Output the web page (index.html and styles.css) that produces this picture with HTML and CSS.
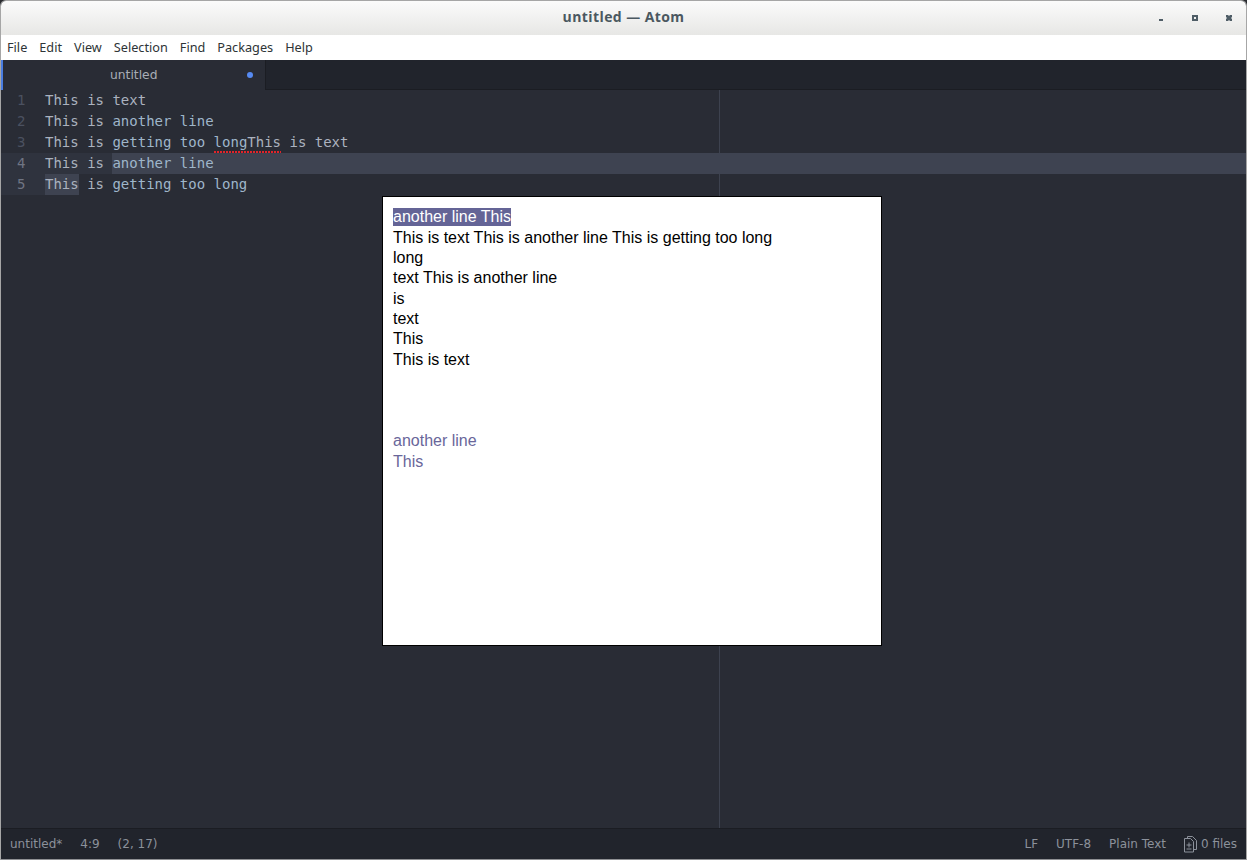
FILE: index.html
```html
<!DOCTYPE html>
<html lang="en">
<head>
<meta charset="utf-8">
<title>untitled — Atom</title>
<link rel="stylesheet" href="styles.css">
</head>
<body>
<div class="window">
  <header class="titlebar">
    <div class="title">untitled — Atom</div>
    <div class="controls">
      <svg class="ctl" width="12" height="12" viewBox="0 0 12 12"><rect x="3" y="6" width="4" height="2" fill="#4f5d66"/></svg>
      <svg class="ctl" width="12" height="12" viewBox="0 0 12 12"><path fill-rule="evenodd" d="M2 2h6v6H2zM4 4v2h2V4z" fill="#4f5d66"/></svg>
      <svg class="ctl" width="12" height="12" viewBox="0 0 12 12"><path d="M2 2h2l1 1h0l1-1h2v2L7 5l1 1v2H6L5 7 4 8H2V6l1-1-1-1z" fill="#4f5d66"/></svg>
    </div>
  </header>
  <nav class="menubar">
    <span class="menu">File</span><span class="menu">Edit</span><span class="menu">View</span><span class="menu">Selection</span><span class="menu">Find</span><span class="menu">Packages</span><span class="menu">Help</span>
  </nav>
  <div class="tabbar">
    <div class="tab"><span class="tab-title">untitled</span><span class="tab-dot"></span></div>
  </div>
  <main class="editor">
    <div class="wrap-guide"></div>
    <div class="row"><span class="num">1</span><span class="code">This is <span class="w">text</span></span></div>
    <div class="row"><span class="num">2</span><span class="code">This is <span class="b">another line</span></span></div>
    <div class="row"><span class="num">3</span><span class="code">This is <span class="b">getting too </span><span class="spell"><span class="b">long</span>This</span> is text</span></div>
    <div class="row row-active"><span class="num num-active">4</span><span class="code">This is <span class="b sel-run">another line</span></span></div>
    <div class="row"><span class="num num-active">5</span><span class="code"><span class="sel">This</span> is <span class="b">getting too long</span></span></div>
    <section class="popup">
      <div class="pl"><span class="hl">another line This</span></div>
      <div class="pl">This is text This is another line This is getting too long</div>
      <div class="pl">long</div>
      <div class="pl">text This is another line</div>
      <div class="pl">is</div>
      <div class="pl">text</div>
      <div class="pl">This</div>
      <div class="pl">This is text</div>
      <div class="pl"></div>
      <div class="pl"></div>
      <div class="pl pur">another line</div>
      <div class="pl pur">This</div>
    </section>
  </main>
  <footer class="statusbar">
    <div class="st-left"><span>untitled*</span><span>4:9</span><span>(2, 17)</span></div>
    <div class="st-right"><span>LF</span><span>UTF-8</span><span>Plain Text</span>
      <span class="files"><svg width="15" height="17" viewBox="0 0 15 17" fill="none" stroke="#8c919b" stroke-width="1"><path d="M4.5 2.5V.5h5l4 4v9h-3M1.5 2.5h6l3 3v10.500h-9zM6 6.500v5M3.500 9h5M3.500 13h5"/></svg>0 files</span>
    </div>
  </footer>
</div>
</body>
</html>
```
FILE: styles.css
```css
* { box-sizing: border-box; }
html, body { margin: 0; padding: 0; height: 100%; background: #2a2c30; }
.window {
  width: 1247px; height: 860px;
  display: flex; flex-direction: column;
  border: 1px solid #a6a6a6; border-bottom-color: #8f9094;
  border-radius: 6px 6px 0 0;
  overflow: hidden;
  background: #292c35;
}
.titlebar {
  height: 34px; flex: none;
  display: flex; align-items: center; justify-content: center;
  background: linear-gradient(#fbfbfb, #e7e7e5);
  position: relative;
  padding: 0 0 3px;
}
.title { font: bold 14px "Open Sans", "Noto Sans", sans-serif; color: #4b5860; letter-spacing: .42px; }
.controls { position: absolute; right: 0; top: 0; height: 34px; display: flex; align-items: center; gap: 22px; padding: 2px 10px 0 0; }
.ctl { display: block; }
.menubar {
  height: 25px; flex: none; background: #fff;
  display: flex; align-items: center; padding: 0 0 2px 6px; gap: 12px;
  font: 12.7px "Noto Sans", "Open Sans", sans-serif; color: #2e3436;
}
.tabbar { height: 30px; flex: none; background: #21242c; display: flex; border-bottom: 1px solid #1b1d23; }
.tab {
  width: 265px; height: 30px; flex: none;
  background: #292c35; border-left: 2px solid #4a7de0; border-right: 1px solid #1b1d23;
  display: flex; align-items: center; position: relative;
  font: 13px "DejaVu Sans", sans-serif; color: #a8adb6;
}
.tab-title { position: absolute; left: 107px; top: 7px; line-height: 16px; font-size: 12.3px; }
.tab-dot { position: absolute; left: 244px; top: 12px; width: 6px; height: 6px; border-radius: 50%; background: #568af2; }
.editor {
  flex: 1; position: relative; background: #292c35;
  font: 14px/21px "DejaVu Sans Mono", monospace; color: #abb2bf;
}
.row { height: 21px; display: flex; white-space: pre; }
.row-active { background: #3e4351; position: relative; }
.num { width: 44px; flex: none; padding-left: 16px; color: #4b5160; }
.num-active { background: #2f333e; color: #6f7583; }
.row-active .code { background: #2f333e; display: flex; white-space: pre; }
.code { flex: 1; min-width: 0; }
.sel-run { flex: 1; background: #3e4351; }
.b { color: #9fb6ca; }
.w { color: #abb2bf; }
.sel { background: #3e4351; display: inline-block; height: 21px; }
.spell { background-image: linear-gradient(90deg, #e0242a 2px, transparent 2px); background-size: 3px 2px; background-repeat: repeat-x; background-position: 0 19px; display: inline-block; height: 21px; }
.wrap-guide { position: absolute; left: 718px; top: 0; bottom: 0; width: 1px; background: #3d424f; }
.popup {
  position: absolute; left: 381px; top: 106px; width: 500px; height: 450px;
  background: #fff; border: 1px solid #000;
  padding: 10.4px 10px;
  font: 16px/20.32px "Liberation Sans", Arial, sans-serif; color: #000;
}
.pl { height: 20.32px; white-space: pre; }
.pl:empty { height: 30.7px; }
.hl { background: #646496; color: #fff; display: inline-block; height: 18px; line-height: 18px; }
.pur { color: #69669a; }
.statusbar {
  height: 31px; flex: none; background: #21242c; border-top: 1px solid #1b1d23;
  display: flex; align-items: center; justify-content: space-between;
  font: 12px "DejaVu Sans", sans-serif; color: #8c919b; padding: 0 9px;
}
.st-left, .st-right { display: flex; align-items: center; }
.st-left { gap: 18px; }
.st-right { gap: 18px; }
.files { display: flex; align-items: center; gap: 3px; margin-left: -1px; }
```
